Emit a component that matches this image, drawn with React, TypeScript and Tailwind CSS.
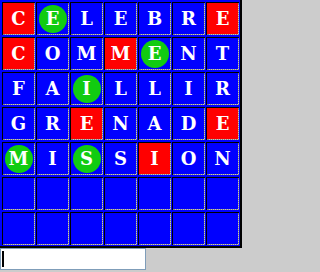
const rows: string[] = [
  "CELEBRE",
  "COMMENT",
  "FAILLIR",
  "GRENADE",
  "MISSION",
  "       ",
  "       ",
];

// r = bien placée (rouge), g = mal placée (rond vert), . = absente
const marks: string[] = [
  "rg....r",
  "r..rg..",
  "..g....",
  "..r...r",
  "g.g.r..",
  ".......",
  ".......",
];

function Cell({ letter, mark }: { letter: string; mark: string }) {
  return (
    <div className="h-[33px] w-[33px] border-l border-t border-black bg-[#c0c0c0]">
      <div
        className={`flex h-full w-full items-center justify-center border-r border-b border-dotted border-[#808080] bg-clip-padding font-['DejaVu_Serif',serif] text-[18px] font-bold leading-none text-white ${
          mark === "r" ? "bg-[#ff0000]" : "bg-[#0000ff]"
        }`}
      >
        {mark === "g" ? (
          <span className="flex h-[28px] w-[28px] items-center justify-center rounded-full bg-[#11cc11]">
            {letter}
          </span>
        ) : (
          letter.trim()
        )}
      </div>
    </div>
  );
}

export default function App() {
  return (
    <div className="min-h-screen bg-[#cccccc]">
      <div className="grid w-[242px] grid-cols-[repeat(7,33px)] gap-x-px gap-y-[2px] border-r-2 border-b-2 border-black bg-[#0000ff] pt-[2px] pr-px pb-px pl-[2px]">
        {rows.map((word, r) =>
          word
            .split("")
            .map((ch, c) => (
              <Cell key={`${r}-${c}`} letter={ch} mark={marks[r][c]} />
            )),
        )}
      </div>
      <div className="flex h-[22px] w-[146px] items-center border border-[#7f9db9] bg-white pl-px">
        <span className="h-[16px] w-[2px] bg-black" />
      </div>
    </div>
  );
}
